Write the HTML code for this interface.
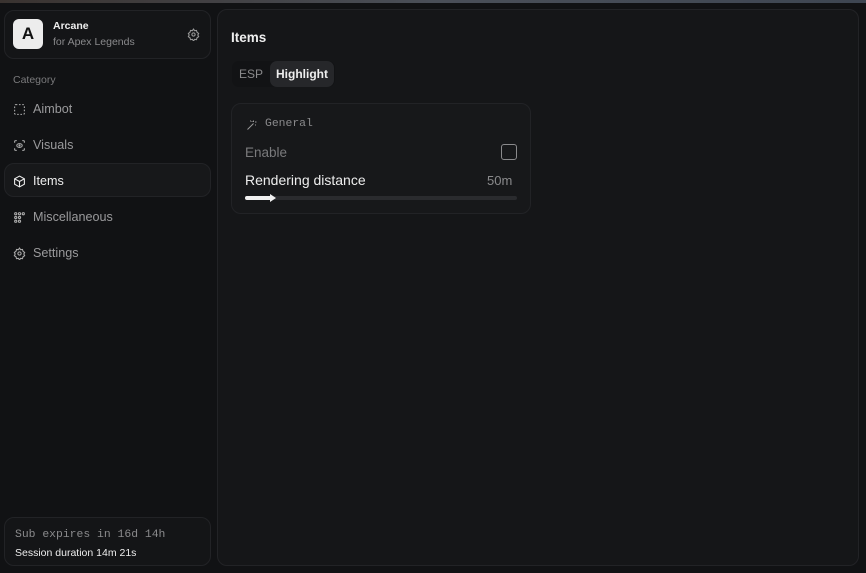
<!DOCTYPE html>
<html><head><style>
*{box-sizing:border-box;margin:0;padding:0}
body{width:866px;height:573px;background:#111214;font-family:"Liberation Sans",sans-serif;position:relative;overflow:hidden;color:#e8e8e8}
.top{position:absolute;left:0;top:0;width:866px;height:3px;background:linear-gradient(90deg,#3a3330,#4a4f58 50%,#3e4652)}
.box{position:absolute;border:1px solid #222326;border-radius:10px;background:#141517}
.nav{position:absolute;left:13px;font-size:12.6px;color:#9a9a9c;display:flex;align-items:center;gap:7px}
.nav svg{width:13px;height:13px}
.mono{font-family:"Liberation Mono",monospace}
</style></head><body>
<div class="top"></div>
<div class="box" style="left:4px;top:10px;width:207px;height:49px"></div>
<div style="position:absolute;left:13px;top:19px;width:30px;height:30px;background:#ececec;border-radius:6px;color:#111;font-weight:bold;font-size:17px;text-align:center;line-height:30px">A</div>
<div style="position:absolute;left:53px;top:20px;font-size:10.5px;font-weight:bold;color:#eee">Arcane</div>
<div style="position:absolute;left:53px;top:36px;font-size:10.5px;color:#8a8a8c">for Apex Legends</div>
<svg style="position:absolute;left:187px;top:28px" width="13" height="13" viewBox="0 0 24 24" fill="none" stroke="#999" stroke-width="2"><circle cx="12" cy="12" r="3"/><path d="M12 2l2 3 3.5-.5 1 3.5 3 2-1.5 3 1.5 3-3 2-1 3.5-3.5-.5-2 3-2-3-3.5.5-1-3.5-3-2 1.5-3-1.5-3 3-2 1-3.5 3.5.5z"/></svg>
<div style="position:absolute;left:13px;top:74px;font-size:10.5px;color:#7a7a7c">Category</div>
<div class="nav" style="top:102px"><svg viewBox="0 0 24 24" fill="none" stroke="#aaa" stroke-width="2" stroke-dasharray="3 3"><rect x="3" y="3" width="18" height="18" rx="2"/></svg>Aimbot</div>
<div class="nav" style="top:138px"><svg viewBox="0 0 24 24" fill="none" stroke="#aaa" stroke-width="2"><path d="M3 7V5a2 2 0 0 1 2-2h2M17 3h2a2 2 0 0 1 2 2v2M21 17v2a2 2 0 0 1-2 2h-2M7 21H5a2 2 0 0 1-2-2v-2"/><ellipse cx="12" cy="12" rx="5" ry="3.5"/><circle cx="12" cy="12" r="1"/></svg>Visuals</div>
<div class="box" style="left:4px;top:163px;width:207px;height:34px;background:#17181a"></div>
<div class="nav" style="top:174px;color:#eee"><svg viewBox="0 0 24 24" fill="none" stroke="#eee" stroke-width="2"><path d="M12 2l9 5v10l-9 5-9-5V7z"/><path d="M3 7l9 5 9-5M12 12v10"/></svg>Items</div>
<div class="nav" style="top:210px"><svg viewBox="0 0 24 24" fill="none" stroke="#aaa" stroke-width="2"><circle cx="5" cy="5" r="2"/><circle cx="12" cy="5" r="2"/><circle cx="19" cy="5" r="2"/><circle cx="5" cy="12" r="2"/><circle cx="12" cy="12" r="2"/><circle cx="5" cy="19" r="2"/><circle cx="12" cy="19" r="2"/></svg>Miscellaneous</div>
<div class="nav" style="top:246px"><svg viewBox="0 0 24 24" fill="none" stroke="#aaa" stroke-width="2"><circle cx="12" cy="12" r="3"/><path d="M12 2l2 3 3.5-.5 1 3.5 3 2-1.5 3 1.5 3-3 2-1 3.5-3.5-.5-2 3-2-3-3.5.5-1-3.5-3-2 1.5-3-1.5-3 3-2 1-3.5 3.5.5z"/></svg>Settings</div>
<div class="box" style="left:4px;top:517px;width:207px;height:49px"></div>
<div class="mono" style="position:absolute;left:15px;top:529px;font-size:11.4px;color:#8a8a8c">Sub expires in 16d 14h</div>
<div style="position:absolute;left:15px;top:547px;font-size:10.5px;color:#eee">Session duration 14m 21s</div>

<div class="box" style="left:217px;top:9px;width:642px;height:557px;background:#151618"></div>
<div style="position:absolute;left:231px;top:30px;font-size:13.5px;font-weight:bold;color:#eee">Items</div>
<div style="position:absolute;left:232px;top:61px;width:103px;height:26px;background:#121315;border-radius:7px"></div>
<div style="position:absolute;left:239px;top:67px;font-size:12px;color:#8a8a8c">ESP</div>
<div style="position:absolute;left:270px;top:61px;width:64px;height:26px;background:#26272a;border-radius:7px;font-size:12px;font-weight:bold;color:#eee;text-align:center;line-height:26px">Highlight</div>
<div class="box" style="left:231px;top:103px;width:300px;height:111px;background:#17181a"></div>
<svg style="position:absolute;left:246px;top:119px" width="12" height="12" viewBox="0 0 24 24" fill="none" stroke="#999" stroke-width="2"><path d="M3 21L15 9M15 3v3M18 6h3M13 5h-2M19 11v2M9 3v2"/></svg>
<div class="mono" style="position:absolute;left:265px;top:118px;font-size:11.4px;color:#8a8a8c">General</div>
<div style="position:absolute;left:245px;top:145px;font-size:13.5px;color:#7a7a7c">Enable</div>
<div style="position:absolute;left:501px;top:144px;width:16px;height:16px;border:1.5px solid #8a8a8c;border-radius:3px"></div>
<div style="position:absolute;left:245px;top:172px;font-size:14px;color:#eee">Rendering distance</div>
<div style="position:absolute;left:487px;top:173px;font-size:13px;color:#8a8a8c">50m</div>
<div style="position:absolute;left:245px;top:196px;width:272px;height:4px;background:#2a2b2e;border-radius:2px"></div>
<div style="position:absolute;left:245px;top:196px;width:28px;height:4px;background:#f0f0f0;border-radius:2px"></div>
<div style="position:absolute;left:270px;top:194px;width:0;height:0;border-left:6px solid #f0f0f0;border-top:4px solid transparent;border-bottom:4px solid transparent"></div>
</body></html>
